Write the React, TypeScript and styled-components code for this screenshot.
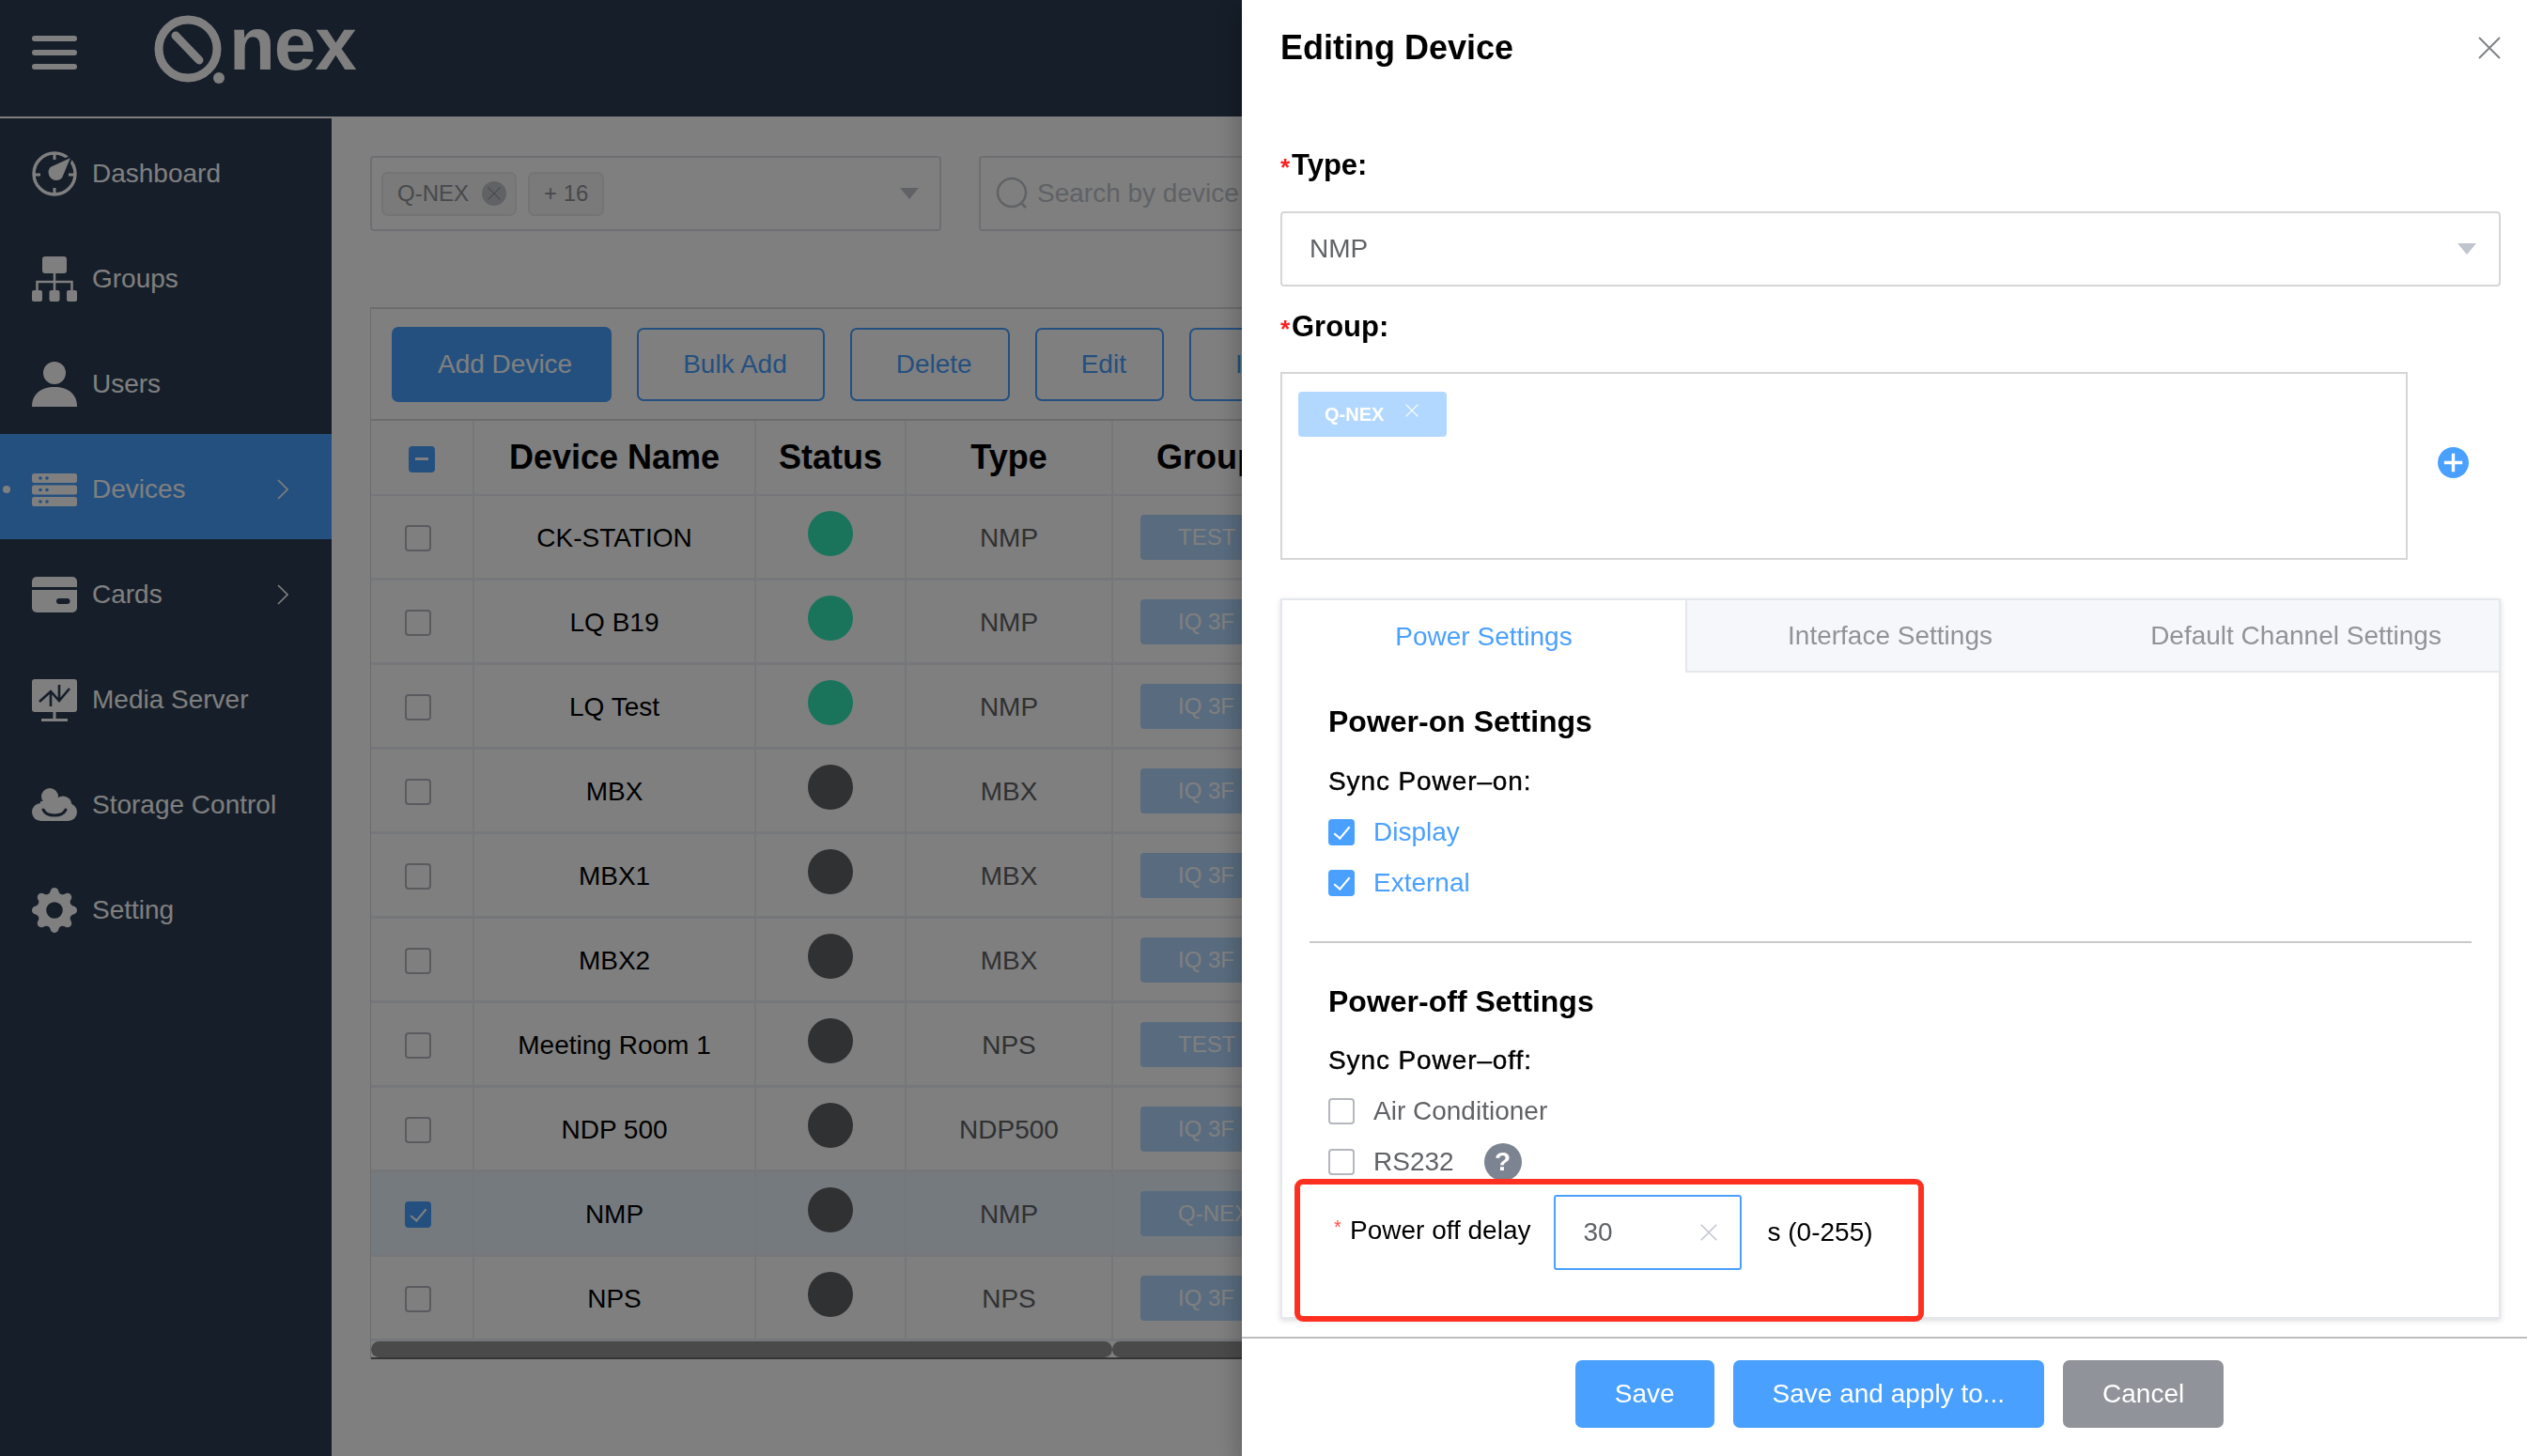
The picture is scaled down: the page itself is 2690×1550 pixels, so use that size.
// App.tsx
import React from 'react';
import styled, { createGlobalStyle } from 'styled-components';
import { BsGearFill } from 'react-icons/bs';

const GlobalStyle = createGlobalStyle`
  html, body {
    margin: 0;
    width: 2690px;
    height: 1550px;
    overflow: hidden;
    background: #fff;
  }
  * { box-sizing: border-box; }
  body {
    font-family: 'Liberation Sans', Arial, sans-serif;
    font-size: 28px;
    color: #000;
  }
`;

const Shell = styled.div`
  display: grid;
  grid-template-columns: 353px 1fr;
  grid-template-rows: 124px 1fr;
  row-gap: 2px;
  width: 2690px;
  height: 1550px;
  overflow: hidden;
`;

const TopBar = styled.header`
  grid-column: 1 / 3;
  display: flex;
  align-items: center;
  padding-left: 34px;
  background: #2c3c52;
  color: #fff;
`;

const Burger = styled.div`
  display: flex;
  flex-direction: column;
  gap: 9px;
  width: 48px;
  margin-right: 82px;
  margin-top: -12px;
  span {
    height: 6px;
    border-radius: 3px;
    background: #fff;
  }
`;

const LogoMark = styled.svg`
  margin-top: -16px;
`;

const LogoWord = styled.span`
  margin: -30px 0 0 4px;
  font-size: 80px;
  font-weight: 700;
  line-height: 80px;
  letter-spacing: -1px;
`;

const Side = styled.nav`
  background: #2c3c52;
  color: #fff;
`;

const NavItem = styled.div<{ $active?: boolean }>`
  position: relative;
  display: flex;
  align-items: center;
  height: 112px;
  padding: 6px 0 0 34px;
  background: ${(p) => (p.$active ? '#49a0ff' : 'transparent')};
  svg.nav-icon {
    width: 48px;
    height: 48px;
    flex: none;
    margin-right: 16px;
  }
  ${(p) =>
    p.$active &&
    `&::before {
      content: '';
      position: absolute;
      left: 3px;
      top: 55px;
      width: 8px;
      height: 8px;
      border-radius: 50%;
      background: #fff;
    }`}
`;

const NavChevron = styled.svg`
  position: absolute;
  left: 295px;
  top: 48px;
  width: 12px;
  height: 22px;
`;

const Main = styled.main`
  min-width: 0;
  padding: 40px 0 0 41px;
`;

const FilterRow = styled.div`
  display: flex;
  gap: 40px;
`;

const FilterBox = styled.div<{ $w: number }>`
  display: flex;
  align-items: center;
  flex: none;
  width: ${(p) => p.$w}px;
  height: 80px;
  padding: 0 10px;
  border: 2px solid #dcdfe6;
  border-radius: 4px;
  background: #fff;
`;

const GrayTag = styled.span`
  display: inline-flex;
  align-items: center;
  height: 47px;
  padding: 0 15px;
  margin-right: 12px;
  border: 2px solid #e9e9eb;
  border-radius: 7px;
  background: #f4f4f5;
  color: #909399;
  font-size: 24px;
`;

const ClosableTag = styled(GrayTag)`
  padding-right: 9px;
`;

const TagClose = styled.span`
  display: inline-flex;
  align-items: center;
  justify-content: center;
  width: 26px;
  height: 26px;
  margin-left: 14px;
  border-radius: 50%;
  background: #c0c4cc;
  color: #909399;
  svg { width: 14px; height: 14px; }
`;

const Caret = styled.span<{ $right?: number }>`
  width: 0;
  height: 0;
  margin-left: auto;
  margin-right: ${(p) => p.$right ?? 0}px;
  border-left: 10px solid transparent;
  border-right: 10px solid transparent;
  border-top: 12px solid #c0c4cc;
`;

const SearchIcon = styled.svg`
  flex: none;
  width: 36px;
  height: 36px;
  margin: 0 8px 0 6px;
`;

const Placeholder = styled.span`
  color: #c0c4cc;
  white-space: nowrap;
`;

const Card = styled.section`
  width: 2100px;
  margin-top: 81px;
  border: 2px solid #d9d9d9;
  border-left-width: 1px;
  border-bottom: none;
  background: #fff;
`;

const Toolbar = styled.div`
  display: flex;
  align-items: center;
  gap: 27px;
  height: 119px;
  padding: 0 0 0 22px;
  border-bottom: 2px solid #d9d9d9;
`;

const ToolButton = styled.button<{ $primary?: boolean }>`
  height: ${(p) => (p.$primary ? 80 : 78)}px;
  padding: ${(p) => (p.$primary ? '0 42px 0 49px' : '0 38px 0 47px')};
  border: ${(p) => (p.$primary ? 'none' : '2px solid #49a0ff')};
  border-radius: 7px;
  background: ${(p) => (p.$primary ? '#49a0ff' : '#fff')};
  color: ${(p) => (p.$primary ? '#fff' : '#49a0ff')};
  font: inherit;
`;

const Grid = styled.table`
  width: 2098px;
  table-layout: fixed;
  border-collapse: separate;
  border-spacing: 0;
`;

const HeadCell = styled.th`
  height: 80px;
  padding: 0;
  border-right: 2px solid #ebeef5;
  border-bottom: 2px solid #ebeef5;
  font-size: 36px;
  font-weight: 700;
  text-align: center;
`;

const GroupHead = styled(HeadCell)`
  padding-left: 46px;
  text-align: left;
`;

const BodyRow = styled.tr<{ $selected?: boolean }>`
  background: ${(p) => (p.$selected ? '#eaf4ff' : '#fff')};
`;

const BodyCell = styled.td`
  height: 90px;
  padding: 0;
  border-right: 2px solid #ebeef5;
  border-bottom: 3px solid #ebeef5;
  text-align: center;
`;

const TextCell = styled(BodyCell)<{ $muted?: boolean }>`
  padding-top: 3px;
  color: ${(p) => (p.$muted ? '#606266' : '#000')};
`;

const Box = styled.span<{ $state?: 'on' | 'mixed' }>`
  position: relative;
  display: inline-block;
  flex: none;
  width: 28px;
  height: 28px;
  border: 2px solid ${(p) => (p.$state ? '#49a0ff' : '#b4b7be')};
  border-radius: 4px;
  background: ${(p) => (p.$state ? '#49a0ff' : '#fff')};
  vertical-align: middle;
  ${(p) =>
    p.$state === 'on' &&
    `&::after {
      content: '';
      position: absolute;
      left: 8px;
      top: 2px;
      width: 7px;
      height: 15px;
      border: solid #fff;
      border-width: 0 2px 2px 0;
      transform: rotate(40deg);
    }`}
  ${(p) =>
    p.$state === 'mixed' &&
    `&::after {
      content: '';
      position: absolute;
      left: 5px;
      top: 10px;
      width: 14px;
      height: 3px;
      background: #fff;
    }`}
`;

const RowBox = styled(Box)`
  margin-right: 8px;
`;

const StatusDot = styled.span<{ $online: boolean }>`
  display: inline-block;
  width: 48px;
  height: 48px;
  margin-bottom: 8px;
  border-radius: 50%;
  background: ${(p) => (p.$online ? '#35e8b8' : '#606266')};
  vertical-align: middle;
`;

const GroupTag = styled.span`
  display: flex;
  align-items: center;
  width: 150px;
  height: 48px;
  margin-left: 29px;
  padding-left: 40px;
  border-radius: 4px;
  background: #b3d8ff;
  color: #fff;
  font-size: 24px;
  white-space: nowrap;
`;

const ScrollTrack = styled.div`
  display: flex;
  height: 19px;
  border-bottom: 2px solid #6a6a6a;
`;

const ScrollPill = styled.div<{ $w: number }>`
  flex: none;
  width: ${(p) => p.$w}px;
  height: 17px;
  border-radius: 9px;
  background: #959595;
`;

const Mask = styled.div`
  position: fixed;
  inset: 0;
  background: rgba(0, 0, 0, 0.5);
`;

const Drawer = styled.aside`
  position: fixed;
  top: 0;
  right: 0;
  display: flex;
  flex-direction: column;
  width: 1368px;
  height: 1550px;
  background: #fff;
  box-shadow: 0 8px 10px -5px rgba(0, 0, 0, 0.2), 0 16px 24px 2px rgba(0, 0, 0, 0.14),
    0 6px 30px 5px rgba(0, 0, 0, 0.12);
`;

const DrawerBody = styled.div`
  flex: 1;
  padding: 31px 28px 0 41px;
`;

const TitleRow = styled.div`
  display: flex;
  align-items: center;
  justify-content: space-between;
  height: 40px;
  svg { width: 24px; height: 24px; }
`;

const Title = styled.h2`
  margin: 0;
  font-size: 36px;
  font-weight: 700;
  line-height: 40px;
`;

const FieldLabel = styled.div<{ $top: number }>`
  display: flex;
  align-items: center;
  height: 40px;
  margin-top: ${(p) => p.$top}px;
  font-size: 31px;
  font-weight: 700;
  i {
    width: 12px;
    margin-top: 4px;
    color: #ff2020;
    font-size: 26px;
    font-style: normal;
  }
`;

const TypeSelect = styled.div`
  display: flex;
  align-items: center;
  height: 80px;
  margin-top: 29px;
  padding: 0 24px 0 29px;
  border: 2px solid #d6d6d6;
  border-radius: 4px;
  color: #606266;
`;

const GroupRow = styled.div`
  display: flex;
  align-items: center;
  margin-top: 28px;
  svg { width: 33px; height: 33px; margin: 0 0 8px 32px; }
`;

const GroupBox = styled.div`
  flex: none;
  width: 1200px;
  height: 200px;
  padding: 19px 17px;
  border: 2px solid #d6d6d6;
`;

const BlueTag = styled.span`
  display: inline-flex;
  align-items: center;
  height: 48px;
  padding: 0 30px 0 28px;
  border-radius: 4px;
  background: #b3d8ff;
  color: #fff;
  font-size: 20px;
  font-weight: 700;
  svg { width: 14px; height: 14px; margin-left: 23px; }
`;

const TabCard = styled.div`
  position: relative;
  height: 767px;
  margin-top: 41px;
  border: 2px solid #e4e7ed;
  box-shadow: 0 2px 6px rgba(0, 0, 0, 0.14);
`;

const TabBar = styled.div`
  display: grid;
  grid-template-columns: 431px 432px 1fr;
  height: 77px;
  background: #f5f7fa;
`;

const Tab = styled.div<{ $active?: boolean }>`
  display: flex;
  align-items: center;
  justify-content: center;
  border-bottom: ${(p) => (p.$active ? 'none' : '2px solid #e4e7ed')};
  border-right: ${(p) => (p.$active ? '2px solid #e4e7ed' : 'none')};
  background: ${(p) => (p.$active ? '#fff' : 'transparent')};
  color: ${(p) => (p.$active ? '#49a0ff' : '#909399')};
`;

const Pane = styled.div`
  padding: 32px 29px 0 49px;
`;

const SectionTitle = styled.h3`
  margin: 0;
  font-size: 32px;
  font-weight: 700;
  line-height: 40px;
`;

const SyncLabel = styled.div<{ $top: number }>`
  margin-top: ${(p) => p.$top}px;
  font-size: 28px;
  line-height: 40px;
  letter-spacing: 0.9px;
  -webkit-text-stroke: 0.4px #000;
`;

const CheckRow = styled.div<{ $first?: boolean; $on?: boolean }>`
  display: flex;
  align-items: center;
  height: 54px;
  margin-top: ${(p) => (p.$first ? 7 : 0)}px;
  gap: 20px;
  color: ${(p) => (p.$on ? '#49a0ff' : '#606266')};
`;

const HelpBadge = styled.span`
  display: inline-flex;
  align-items: center;
  justify-content: center;
  width: 40px;
  height: 40px;
  margin: 0 0 0 12px;
  border-radius: 50%;
  background: #7d8491;
  color: #fff;
  font-weight: 700;
`;

const Divider = styled.hr`
  height: 2px;
  margin: 35px 0 42px -20px;
  border: none;
  background: #c8c8c8;
`;

const DelayRow = styled.div`
  display: flex;
  align-items: center;
  margin: 8px 0 0 6px;
`;

const DelayLabel = styled.span`
  margin: 0 24px 5px 0;
  white-space: nowrap;
  sup {
    display: inline-block;
    width: 17px;
    color: #ff4d4f;
    font-size: 20px;
    line-height: 1;
    vertical-align: 6px;
  }
`;

const DelayInput = styled.div`
  display: flex;
  align-items: center;
  justify-content: space-between;
  width: 200px;
  height: 80px;
  margin-right: 28px;
  padding: 0 24px 0 30px;
  border: 2px solid #49a0ff;
  border-radius: 3px;
  color: #606266;
  svg { width: 18px; height: 18px; }
`;

// annotation drawn on top of the screenshot
const RedFrame = styled.div`
  position: absolute;
  left: 13px;
  top: 616px;
  width: 670px;
  height: 152px;
  border: 6px solid #ff3020;
  border-radius: 9px;
`;

const Footer = styled.footer`
  display: flex;
  justify-content: center;
  gap: 20px;
  height: 127px;
  padding: 23px 0 0 32px;
  border-top: 2px solid #bdbdbd;
`;

const FootButton = styled.button<{ $gray?: boolean }>`
  height: 72px;
  padding: 0 42px;
  border: none;
  border-radius: 7px;
  background: ${(p) => (p.$gray ? '#909399' : '#49a0ff')};
  color: #fff;
  font: inherit;
`;

const Cross: React.FC<{ color: string; width?: number }> = ({ color, width = 2 }) => (
  <svg viewBox="0 0 24 24" fill="none" stroke={color} strokeWidth={width}>
    <path d="M1 1 23 23M23 1 1 23" />
  </svg>
);

const Chevron = () => (
  <NavChevron viewBox="0 0 12 22" fill="none" stroke="#fff" strokeWidth="1.6">
    <path d="M1 1 11 11 1 21" />
  </NavChevron>
);

const DashboardIcon = () => (
  <svg className="nav-icon" viewBox="0 0 48 48" fill="#fff">
    <circle cx="24" cy="24" r="22" fill="none" stroke="#fff" strokeWidth="3.4" />
    <path d="M24 2v7M24 39v7M2 25h7M39 25h7" stroke="#fff" strokeWidth="3" />
    <path d="M43 5 33 29a9.500 9.500 0 1 1-14-13z" stroke="#2c3c52" strokeWidth="2.2" />
  </svg>
);

const GroupsIcon = () => (
  <svg className="nav-icon" viewBox="0 0 48 48" fill="#fff">
    <rect x="11" y="0" width="26" height="18" rx="3" />
    <rect x="0" y="36" width="11" height="12" rx="2" />
    <rect x="18.500" y="36" width="11" height="12" rx="2" />
    <rect x="37" y="36" width="11" height="12" rx="2" />
    <path d="M24 18v18M5.500 36v-9h37v9" fill="none" stroke="#fff" strokeWidth="2.5" />
  </svg>
);

const UsersIcon = () => (
  <svg className="nav-icon" viewBox="0 0 48 48" fill="#fff">
    <circle cx="24" cy="12" r="12" />
    <path d="M0 48c0-14 10-21 24-21s24 7 24 21z" />
  </svg>
);

const DevicesIcon = () => (
  <svg className="nav-icon" viewBox="0 0 48 48" fill="#fff">
    {[7, 19.5, 32].map((y) => (
      <g key={y}>
        <rect x="0" y={y} width="48" height="10" rx="2.500" />
        <circle cx="9" cy={y + 5} r="1.800" fill="#49a0ff" />
        <circle cx="16" cy={y + 5} r="1.800" fill="#49a0ff" />
      </g>
    ))}
  </svg>
);

const CardsIcon = () => (
  <svg className="nav-icon" viewBox="0 0 48 48" fill="#fff">
    <path d="M0 10a5 5 0 0 1 5-5h38a5 5 0 0 1 5 5v6H0z" />
    <path d="M0 19h48v19a5 5 0 0 1-5 5H5a5 5 0 0 1-5-5z" />
    <rect x="26" y="28" width="14.500" height="6" rx="3" fill="#2c3c52" />
  </svg>
);

const MediaIcon = () => (
  <svg className="nav-icon" viewBox="0 0 48 48" fill="#fff">
    <rect x="0" y="2" width="48" height="35" rx="3" />
    <path d="M24 37v7M10 45.500h28" stroke="#fff" strokeWidth="3" />
    <path
      d="M8 26 20 15 29 25 40 12M20 15v16M29 25V8"
      fill="none"
      stroke="#2c3c52"
      strokeWidth="2.600"
    />
  </svg>
);

const StorageIcon = () => (
  <svg className="nav-icon" viewBox="0 0 48 48" fill="#fff">
    <circle cx="19" cy="15" r="9" />
    <circle cx="33" cy="24" r="9.500" />
    <circle cx="9.500" cy="31.500" r="9.500" />
    <circle cx="38.500" cy="31.500" r="9.500" />
    <rect x="9" y="20" width="30" height="21" />
    <path d="M12 29c4 8 20 8 24 0" fill="none" stroke="#2c3c52" strokeWidth="3" strokeLinecap="round" />
  </svg>
);

const Logo = () => (
  <LogoMark width="76" height="76" viewBox="0 0 76 76" fill="none" stroke="#fff">
    <circle cx="36" cy="36" r="31" strokeWidth="9" />
    <path d="M23 22 48 48" strokeWidth="9" strokeLinecap="round" />
    <circle cx="69" cy="67" r="6" fill="#fff" stroke="none" />
  </LogoMark>
);

type Device = { name: string; online: boolean; type: string; group: string; selected?: boolean };

const devices: Device[] = [
  { name: 'CK-STATION', online: true, type: 'NMP', group: 'TEST' },
  { name: 'LQ B19', online: true, type: 'NMP', group: 'IQ 3F' },
  { name: 'LQ Test', online: true, type: 'NMP', group: 'IQ 3F' },
  { name: 'MBX', online: false, type: 'MBX', group: 'IQ 3F' },
  { name: 'MBX1', online: false, type: 'MBX', group: 'IQ 3F' },
  { name: 'MBX2', online: false, type: 'MBX', group: 'IQ 3F' },
  { name: 'Meeting Room 1', online: false, type: 'NPS', group: 'TEST' },
  { name: 'NDP 500', online: false, type: 'NDP500', group: 'IQ 3F' },
  { name: 'NMP', online: false, type: 'NMP', group: 'Q-NEX', selected: true },
  { name: 'NPS', online: false, type: 'NPS', group: 'IQ 3F' },
];

const App: React.FC = () => {
  return (
    <>
      <GlobalStyle />
      <Shell>
        <TopBar>
          <Burger>
            <span />
            <span />
            <span />
          </Burger>
          <Logo />
          <LogoWord>nex</LogoWord>
        </TopBar>

        <Side>
          <NavItem><DashboardIcon />Dashboard</NavItem>
          <NavItem><GroupsIcon />Groups</NavItem>
          <NavItem><UsersIcon />Users</NavItem>
          <NavItem $active><DevicesIcon />Devices<Chevron /></NavItem>
          <NavItem><CardsIcon />Cards<Chevron /></NavItem>
          <NavItem><MediaIcon />Media Server</NavItem>
          <NavItem><StorageIcon />Storage Control</NavItem>
          <NavItem><BsGearFill className="nav-icon" />Setting</NavItem>
        </Side>

        <Main>
          <FilterRow>
            <FilterBox $w={608}>
              <ClosableTag>
                Q-NEX
                <TagClose><Cross color="#909399" /></TagClose>
              </ClosableTag>
              <GrayTag>+ 16</GrayTag>
              <Caret $right={12} />
            </FilterBox>
            <FilterBox $w={640}>
              <SearchIcon viewBox="0 0 36 36" fill="none" stroke="#c0c4cc" strokeWidth="2.500">
                <circle cx="17" cy="17" r="15" />
                <path d="M27 28l5 5" />
              </SearchIcon>
              <Placeholder>Search by device</Placeholder>
            </FilterBox>
          </FilterRow>

          <Card>
            <Toolbar>
              <ToolButton $primary>Add Device</ToolButton>
              <ToolButton>Bulk Add</ToolButton>
              <ToolButton>Delete</ToolButton>
              <ToolButton>Edit</ToolButton>
              <ToolButton>Import</ToolButton>
            </Toolbar>
            <Grid>
              <colgroup>
                <col width="110" />
                <col width="300" />
                <col width="160" />
                <col width="220" />
                <col width="400" />
                <col />
              </colgroup>
              <thead>
                <tr>
                  <HeadCell><Box $state="mixed" /></HeadCell>
                  <HeadCell>Device Name</HeadCell>
                  <HeadCell>Status</HeadCell>
                  <HeadCell>Type</HeadCell>
                  <GroupHead>Group</GroupHead>
                  <HeadCell />
                </tr>
              </thead>
              <tbody>
                {devices.map((d) => (
                  <BodyRow key={d.name} $selected={d.selected}>
                    <BodyCell><RowBox $state={d.selected ? 'on' : undefined} /></BodyCell>
                    <TextCell>{d.name}</TextCell>
                    <BodyCell><StatusDot $online={d.online} /></BodyCell>
                    <TextCell $muted>{d.type}</TextCell>
                    <BodyCell><GroupTag>{d.group}</GroupTag></BodyCell>
                    <BodyCell />
                  </BodyRow>
                ))}
              </tbody>
            </Grid>
            <ScrollTrack>
              <ScrollPill $w={789} />
              <ScrollPill $w={1300} />
            </ScrollTrack>
          </Card>
        </Main>
      </Shell>

      <Mask />

      <Drawer>
        <DrawerBody>
          <TitleRow>
            <Title>Editing Device</Title>
            <Cross color="#7f8287" />
          </TitleRow>

          <FieldLabel $top={85}><i>*</i>Type:</FieldLabel>
          <TypeSelect>
            NMP
            <Caret />
          </TypeSelect>

          <FieldLabel $top={23}><i>*</i>Group:</FieldLabel>
          <GroupRow>
            <GroupBox>
              <BlueTag>
                Q-NEX
                <Cross color="#fff" />
              </BlueTag>
            </GroupBox>
            <svg viewBox="0 0 34 34">
              <circle cx="17" cy="17" r="17" fill="#49a0ff" />
              <path d="M17 7v20M7 17h20" stroke="#fff" strokeWidth="3.500" />
            </svg>
          </GroupRow>

          <TabCard>
            <TabBar>
              <Tab $active>Power Settings</Tab>
              <Tab>Interface Settings</Tab>
              <Tab>Default Channel Settings</Tab>
            </TabBar>
            <Pane>
              <SectionTitle>Power-on Settings</SectionTitle>
              <SyncLabel $top={24}>Sync Power–on:</SyncLabel>
              <CheckRow $first $on><Box $state="on" />Display</CheckRow>
              <CheckRow $on><Box $state="on" />External</CheckRow>
              <Divider />
              <SectionTitle>Power-off Settings</SectionTitle>
              <SyncLabel $top={23}>Sync Power–off:</SyncLabel>
              <CheckRow $first><Box />Air Conditioner</CheckRow>
              <CheckRow><Box />RS232<HelpBadge>?</HelpBadge></CheckRow>
              <DelayRow>
                <DelayLabel><sup>*</sup>Power off delay</DelayLabel>
                <DelayInput>
                  30
                  <Cross color="#c0c4cc" />
                </DelayInput>
                s (0-255)
              </DelayRow>
            </Pane>
            <RedFrame />
          </TabCard>
        </DrawerBody>
        <Footer>
          <FootButton>Save</FootButton>
          <FootButton>Save and apply to...</FootButton>
          <FootButton $gray>Cancel</FootButton>
        </Footer>
      </Drawer>
    </>
  );
};

export default App;
